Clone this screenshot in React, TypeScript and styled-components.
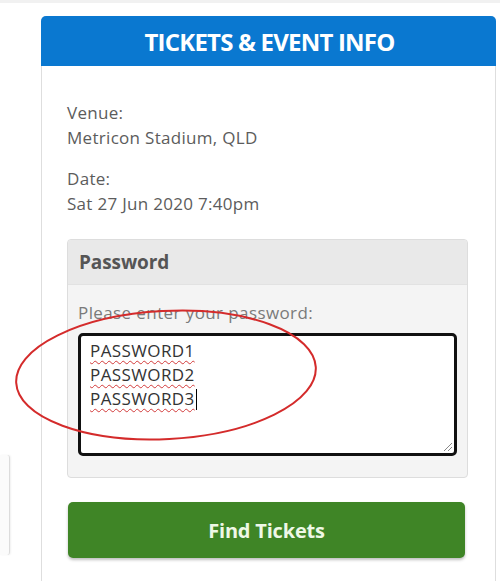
import React from "react";
import styled, { createGlobalStyle } from "styled-components";

const Global = createGlobalStyle`
  html, body { margin: 0; padding: 0; background: #ffffff; }
  body { font-family: "Open Sans", "Noto Sans", sans-serif; overflow: hidden; }
`;

const Page = styled.div`
  position: relative;
  width: 500px;
  height: 581px;
  overflow: hidden;
  background: #fff;
  border-top: 3px solid #f1f1f1;
  box-sizing: border-box;
`;

const Row = styled.div`
  display: flex;
  align-items: flex-start;
`;

const LeftSliver = styled.div`
  width: 9px;
  height: 100px;
  margin-top: 452px;
  background: #fbfbfb;
  border-right: 1px solid #dcdcdc;
  border-radius: 0 3px 3px 0;
  box-shadow: 1px 0 2px rgba(0, 0, 0, 0.06);
`;

const Card = styled.section`
  margin-left: 31px;
  margin-top: 13px;
  width: 455px;
  min-height: 600px;
  border: 1px solid #dedede;
  border-top: none;
  border-radius: 5px 5px 0 0;
  box-sizing: border-box;
  background: #fff;
`;

const CardHeader = styled.h2`
  margin: 0 -1px;
  height: 50px;
  background: #0a78d0;
  border-radius: 5px 5px 0 0;
  color: #ffffff;
  font-size: 24px;
  font-weight: 700;
  letter-spacing: -0.8px;
  display: flex;
  align-items: center;
  justify-content: center;
  padding-left: 2px;
`;

const CardBody = styled.div`
  padding: 34px 27px 30px 25px;
  display: flex;
  flex-direction: column;
`;

const InfoGroup = styled.div`
  display: flex;
  flex-direction: column;
  margin-bottom: 16px;
`;

const InfoText = styled.div`
  font-size: 17px;
  line-height: 25px;
  letter-spacing: 0.3px;
  color: #5c5c5c;
`;

const Panel = styled.div`
  margin-top: 7px;
  border: 1px solid #dddddd;
  border-radius: 4px;
  background: #f4f4f4;
  overflow: hidden;
`;

const PanelHeader = styled.div`
  height: 44px;
  background: #e9e9e9;
  border-bottom: 1px solid #e2e2e2;
  display: flex;
  align-items: center;
  padding-left: 11px;
  font-size: 19px;
  font-weight: 700;
  letter-spacing: -0.1px;
  color: #555555;
`;

const PanelBody = styled.div`
  padding: 17px 10px 21px 10px;
  display: flex;
  flex-direction: column;
`;

const FieldLabel = styled.div`
  font-size: 17px;
  line-height: 22px;
  letter-spacing: 0.4px;
  color: #7a7a7a;
  margin-bottom: 9px;
`;

const TextBox = styled.div`
  position: relative;
  height: 123px;
  box-sizing: border-box;
  border: 3px solid #111111;
  border-radius: 5px;
  background: #ffffff;
  padding: 3px 9px;
  font-size: 17px;
  line-height: 24px;
  letter-spacing: 0.4px;
  color: #333333;
`;

const Line = styled.div`
  display: flex;
  align-items: center;
`;

const Misspelt = styled.span`
  text-decoration: underline wavy #d23a3a;
  text-decoration-thickness: 1px;
  text-underline-offset: 3px;
`;

const Caret = styled.span`
  display: inline-block;
  width: 1px;
  height: 21px;
  background: #000;
  margin-left: 1px;
`;

const Grip = styled.svg`
  position: absolute;
  right: 1px;
  bottom: 1px;
`;

const FindButton = styled.button`
  margin-top: 24px;
  margin-left: 1px;
  height: 56px;
  width: 397px;
  border: none;
  border-radius: 5px;
  background: #3f8526;
  box-shadow: 0 2px 3px rgba(0, 0, 0, 0.25);
  color: #eef8e6;
  font-family: "Open Sans", "Noto Sans", sans-serif;
  font-size: 20px;
  font-weight: 700;
  letter-spacing: -0.2px;
  cursor: pointer;
`;

const Annotation = styled.svg`
  position: absolute;
  left: 0;
  top: 0;
  pointer-events: none;
`;

export default function App() {
  return (
    <>
      <Global />
      <Page>
        <Row>
          <LeftSliver />
          <Card>
            <CardHeader>TICKETS &amp; EVENT INFO</CardHeader>
            <CardBody>
              <InfoGroup>
                <InfoText>Venue:</InfoText>
                <InfoText>Metricon Stadium, QLD</InfoText>
              </InfoGroup>
              <InfoGroup>
                <InfoText>Date:</InfoText>
                <InfoText>Sat 27 Jun 2020 7:40pm</InfoText>
              </InfoGroup>
              <Panel>
                <PanelHeader>Password</PanelHeader>
                <PanelBody>
                  <FieldLabel>Please enter your password:</FieldLabel>
                  <TextBox role="textbox" aria-multiline="true">
                    <Line><Misspelt>PASSWORD1</Misspelt></Line>
                    <Line><Misspelt>PASSWORD2</Misspelt></Line>
                    <Line><Misspelt>PASSWORD3</Misspelt><Caret /></Line>
                    <Grip width="12" height="12" viewBox="0 0 12 12">
                      <path d="M11 3 L3 11 M11 7 L7 11" stroke="#888" strokeWidth="1" />
                    </Grip>
                  </TextBox>
                </PanelBody>
              </Panel>
              <FindButton>Find Tickets</FindButton>
            </CardBody>
          </Card>
        </Row>
        <Annotation width="500" height="581" viewBox="0 0 500 581">
          <ellipse
            cx="166"
            cy="372"
            rx="150"
            ry="64"
            fill="none"
            stroke="#d42b2b"
            strokeWidth="2"
            transform="rotate(-3 166 372)"
          />
        </Annotation>
      </Page>
    </>
  );
}
